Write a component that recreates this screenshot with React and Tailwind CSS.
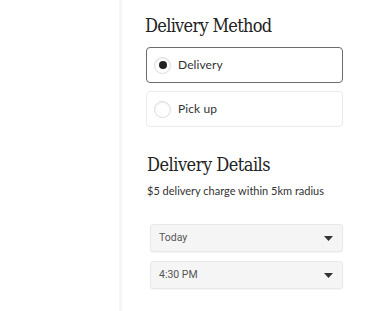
import React from 'react';

const sans = { fontFamily: 'Lato, "Open Sans", sans-serif' };

function Radio({ checked }) {
  return (
    <span className="flex h-[17px] w-[17px] items-center justify-center rounded-full border border-[#dcdcdc] bg-white shadow-[inset_0_1px_2px_rgba(0,0,0,0.08)]">
      {checked && <span className="h-[8px] w-[8px] rounded-full bg-[#222]" />}
    </span>
  );
}

function Option({ label, checked }) {
  return (
    <div
      className={
        'flex h-[36px] items-center gap-[7px] rounded-[4px] border bg-white pl-[7px] ' +
        (checked ? 'border-[#6b6b6b]' : 'border-[#ebebeb]')
      }
    >
      <Radio checked={checked} />
      <span className="text-[12px] tracking-[0.1px] text-[#333]" style={sans}>
        {label}
      </span>
    </div>
  );
}

function Select({ value }) {
  return (
    <div className="flex h-[28px] items-center justify-between rounded-[3px] border border-[#e8e8e8] bg-[#f5f5f5] pl-[8px] pr-[9px] shadow-[0_1px_1px_rgba(0,0,0,0.04)]">
      <span className="text-[10.5px] text-[#555]" style={{ fontFamily: 'Roboto, sans-serif' }}>
        {value}
      </span>
      <svg width="9" height="5" viewBox="0 0 9 5">
        <path d="M0 0h9L4.5 5z" fill="#333" />
      </svg>
    </div>
  );
}

export default function App() {
  const serif = { fontFamily: '"DejaVu Serif Condensed", "DejaVu Serif", serif' };
  return (
    <div className="flex h-[311px] w-[388px] bg-white">
      <div className="w-[119px]" />
      <div className="w-[3px] bg-[#f6f6f6]" />
      <div className="w-[221px] pl-[23px] pt-[14px]">
        <h2 className="font-stretch-condensed text-[18px] leading-[24px] text-[#222] tracking-[-0.7px]" style={serif}>
          Delivery Method
        </h2>
        <div className="mt-[9px] ml-[1px] flex flex-col gap-[8px]">
          <Option label="Delivery" checked />
          <Option label="Pick up" />
        </div>
        <h2 className="font-stretch-condensed mt-[26px] ml-[2px] text-[18px] leading-[24px] text-[#222] tracking-[-0.5px]" style={serif}>
          Delivery Details
        </h2>
        <p className="mt-[6px] ml-[2px] whitespace-nowrap text-[11px] leading-[16px] text-[#333]" style={sans}>
          $5 delivery charge within 5km radius
        </p>
        <div className="mt-[25px] ml-[5px] flex flex-col gap-[9px]">
          <Select value="Today" />
          <Select value="4:30 PM" />
        </div>
      </div>
    </div>
  );
}
